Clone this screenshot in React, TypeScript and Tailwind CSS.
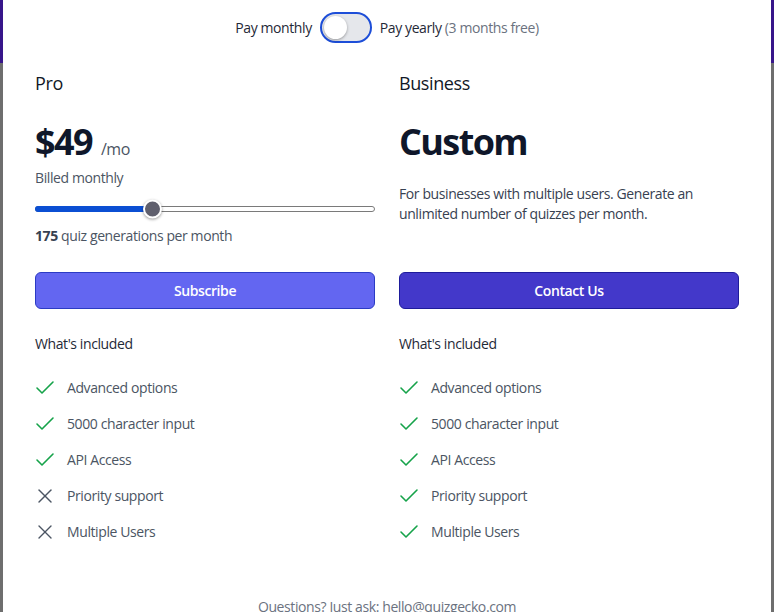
import { Check, X } from "lucide-react";

type Feature = { label: string; included: boolean };

const proFeatures: Feature[] = [
    { label: "Advanced options", included: true },
    { label: "5000 character input", included: true },
    { label: "API Access", included: true },
    { label: "Priority support", included: false },
    { label: "Multiple Users", included: false },
];

const businessFeatures: Feature[] = [
    { label: "Advanced options", included: true },
    { label: "5000 character input", included: true },
    { label: "API Access", included: true },
    { label: "Priority support", included: true },
    { label: "Multiple Users", included: true },
];

function FeatureList({ features }: { features: Feature[] }) {
    return (
        <div>
            <p className="text-sm leading-5 text-[#1f2937]">What's included</p>
            <ul className="mt-[22px] flex flex-col gap-3">
                {features.map((f) => (
                    <li key={f.label} className="flex h-6 items-center gap-[10px]">
                        {f.included ? (
                            <Check size={24} strokeWidth={1.6} className="-ml-[2px] text-[#16a34a]" />
                        ) : (
                            <X size={24} strokeWidth={1.4} className="-ml-[2px] text-[#4b5563]" />
                        )}
                        <span className="text-sm leading-5 text-[#4b5563]">{f.label}</span>
                    </li>
                ))}
            </ul>
        </div>
    );
}

export default function App() {
    return (
        <div className="flex h-[612px] w-full overflow-hidden bg-[linear-gradient(to_bottom,#37168a_63px,#6e6e6e_63px)] px-[3px] font-['Segoe_UI','Open_Sans',sans-serif] tracking-[-0.025em]">
            <div className="flex flex-1 flex-col bg-white px-8 pt-3">
                {/* billing toggle */}
                <div className="flex items-center justify-center gap-2 text-sm text-[#1f2937]">
                    <span>Pay monthly</span>
                    <div className="flex h-[31px] w-[52px] items-center rounded-full border-2 border-[#1d4ed8] bg-[#e5e7eb] p-[2px]">
                        <div className="h-[23px] w-[23px] rounded-full bg-white shadow-[0_1px_3px_rgba(0,0,0,0.35)]" />
                    </div>
                    <span>
                        Pay yearly <span className="text-[#6b7280]">(3 months free)</span>
                    </span>
                </div>

                <div className="mt-[26px] grid grid-cols-2 gap-6">
                    {/* Pro */}
                    <div>
                        <div className="h-[203px]">
                            <h3 className="text-lg leading-7 text-[#111827]">Pro</h3>
                            <div className="mt-[25px] flex items-baseline">
                                <span className="text-4xl leading-10 font-bold tracking-[-0.045em] text-[#0f172a]">$49</span>
                                <span className="ml-[9px] text-base text-[#4b5563]">/mo</span>
                            </div>
                            <p className="mt-[6px] text-sm leading-5 text-[#4b5563]">Billed monthly</p>
                            <div className="mt-[11px] flex h-5 items-center">
                                <div className="relative h-[6px] w-full rounded-full border border-[#7a7a7a] bg-white">
                                    <div className="absolute -top-px -left-px h-[6px] w-[118px] rounded-full bg-[#0b4fd3]" />
                                    <div className="absolute top-1/2 left-[107px] h-[19px] w-[19px] -translate-y-1/2 rounded-full border-2 border-white bg-[#5f5f6d] shadow-[0_1px_3px_rgba(0,0,0,0.4)]" />
                                </div>
                            </div>
                            <p className="mt-[7px] text-sm leading-5 text-[#4b5563]">
                                <span className="font-bold text-[#374151]">175</span> quiz generations per month
                            </p>
                        </div>
                        <button className="h-[37px] w-full rounded-md border border-[#2b3bc4] bg-[#6366f1] text-sm font-semibold text-white">
                            Subscribe
                        </button>
                        <div className="mt-[25px]">
                            <FeatureList features={proFeatures} />
                        </div>
                    </div>

                    {/* Business */}
                    <div>
                        <div className="h-[203px]">
                            <h3 className="text-lg leading-7 text-[#111827]">Business</h3>
                            <div className="mt-[25px] text-4xl leading-10 font-bold tracking-[-0.045em] text-[#0f172a]">Custom</div>
                            <p className="mt-[22px] text-sm leading-5 text-[#374151]">
                                For businesses with multiple users. Generate an unlimited number of quizzes per month.
                            </p>
                        </div>
                        <button className="h-[37px] w-full rounded-md border border-[#1e1b9b] bg-[#4338ca] text-sm font-semibold text-white">
                            Contact Us
                        </button>
                        <div className="mt-[25px]">
                            <FeatureList features={businessFeatures} />
                        </div>
                    </div>
                </div>

                <p className="mt-[53px] text-center text-sm text-[#6b7280]">
                    Questions? Just ask: hello@quizgecko.com
                </p>
            </div>
        </div>
    );
}
